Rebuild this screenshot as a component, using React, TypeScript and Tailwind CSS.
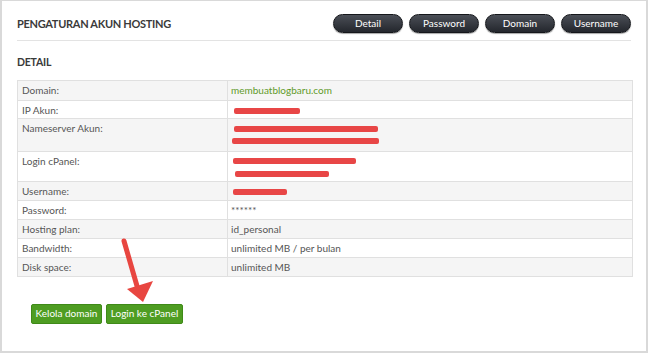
import React from 'react';

type Row = {
  label: string;
  value?: React.ReactNode;
  h: string;
};

// redacted value: red marker strokes over faint text
const Redact = ({ w, ml = 'ml-[3px]' }: { w: string; ml?: string }) => (
  <div className={`h-[6px] ${w} ${ml} rounded-[2px] bg-[#e84646]`} />
);

const rows: Row[] = [
  { label: 'Domain:', value: <span className="text-[#5f9a2a]">membuatblogbaru.com</span>, h: 'h-[19px]' },
  { label: 'IP Akun:', value: <div className="pt-[4px]"><Redact w="w-[66px]" /></div>, h: 'h-[18px]' },
  {
    label: 'Nameserver Akun:',
    value: (
      <div className="flex flex-col gap-[6px] pt-[4px]">
        <Redact w="w-[144px]" />
        <Redact w="w-[147px]" ml="ml-[1px]" />
      </div>
    ),
    h: 'h-[33px]',
  },
  {
    label: 'Login cPanel:',
    value: (
      <div className="flex flex-col gap-[7px] pt-[3px]">
        <Redact w="w-[123px]" ml="ml-[2px]" />
        <Redact w="w-[94px]" ml="ml-[4px]" />
      </div>
    ),
    h: 'h-[30px]',
  },
  { label: 'Username:', value: <div className="pt-[4px]"><Redact w="w-[54px]" ml="ml-[2px]" /></div>, h: 'h-[19px]' },
  { label: 'Password:', value: '******', h: 'h-[19px]' },
  { label: 'Hosting plan:', value: 'id_personal', h: 'h-[19px]' },
  { label: 'Bandwidth:', value: 'unlimited MB / per bulan', h: 'h-[19px]' },
  { label: 'Disk space:', value: 'unlimited MB', h: 'h-[19px]' },
];

const tabs = ['Detail', 'Password', 'Domain', 'Username'];

export default function App() {
  return (
    <div
      className="relative h-[355px] w-[650px] overflow-hidden bg-white"
      style={{ fontFamily: 'Lato, "Open Sans", sans-serif' }}
    >
      <div className="h-[353px] w-[648px] border-2 border-t border-[#d9d9d9] bg-white px-[15px]">
        {/* header */}
        <div className="flex h-[40px] items-center justify-between border-b border-[#e3e3e3] pt-[6px]">
          <h1 className="mt-[2px] text-[11px] font-bold tracking-[-0.3px] text-[#3a3a3a]">PENGATURAN AKUN HOSTING</h1>
          <div className="flex gap-[6px]">
            {tabs.map((t) => (
              <button
                key={t}
                className="h-[19px] w-[70px] rounded-full border border-[#15171b] bg-gradient-to-b from-[#4b4f57] to-[#24272d] text-[10px] text-white shadow-[0_1px_1px_rgba(0,0,0,0.35)]"
              >
                {t}
              </button>
            ))}
          </div>
        </div>

        <h2 className="mt-[14px] text-[10.5px] font-bold tracking-[-0.2px] text-[#3a3a3a]">DETAIL</h2>

        {/* detail table */}
        <div className="mt-[9px] w-[616px] border border-[#e0e0e0] text-[10px] leading-[12px] text-[#555]">
          {rows.map((r, i) => (
            <div
              key={r.label}
              className={`flex ${r.h} ${i > 0 ? 'border-t border-[#e0e0e0]' : ''} ${i % 2 === 0 ? 'bg-[#f5f5f5]' : 'bg-white'}`}
            >
              <div className="w-[210px] shrink-0 border-r border-[#e0e0e0] px-[4px] pt-[3px]">{r.label}</div>
              <div className="flex-1 px-[3px] pt-[3px]">{r.value}</div>
            </div>
          ))}
        </div>

        {/* actions */}
        <div className="ml-[14px] mt-[27px] flex gap-[4px]">
          <button className="h-[20px] w-[71px] rounded-[2px] border border-[#3f8a18] bg-[#4e9d22] text-[10px] text-white">
            Kelola domain
          </button>
          <button className="h-[20px] w-[77px] rounded-[2px] border border-[#3f8a18] bg-[#4e9d22] text-[10px] text-white">
            Login ke cPanel
          </button>
        </div>
      </div>

      {/* annotation arrow */}
      <svg className="absolute left-0 top-0" width="650" height="355" viewBox="0 0 650 355">
        <line x1="124" y1="241" x2="137" y2="286" stroke="#e84640" strokeWidth="5" strokeLinecap="round" />
        <polygon points="127,289 153,281 143,302" fill="#e84640" />
      </svg>
    </div>
  );
}
